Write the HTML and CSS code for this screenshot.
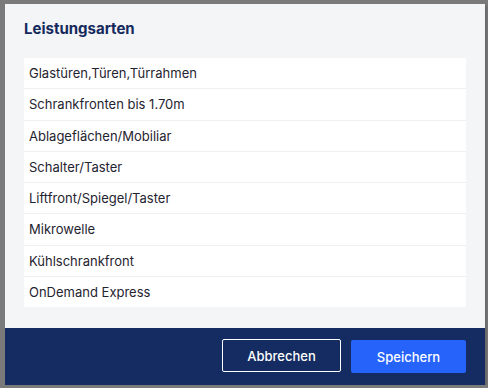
FILE: index.html
```html
<!DOCTYPE html>
<html>
<head>
    <title>Leistungsarten</title>
    <meta name="viewport" content="width=device-width, initial-scale=1"/>
    <link rel="stylesheet" href="styles.css">
</head>
<body>
<div class="modal">
    <div class="modal-body">
        <h2 class="modal-title">Leistungsarten</h2>
        <ul class="service-list">
            <li>Glastüren,Türen,Türrahmen</li>
            <li>Schrankfronten bis 1.70m</li>
            <li>Ablageflächen/Mobiliar</li>
            <li>Schalter/Taster</li>
            <li>Liftfront/Spiegel/Taster</li>
            <li>Mikrowelle</li>
            <li>Kühlschrankfront</li>
            <li>OnDemand Express</li>
        </ul>
    </div>
    <div class="modal-footer">
        <button type="button" class="btn btn-outline">Abbrechen</button>
        <button type="submit" class="btn btn-primary">Speichern</button>
    </div>
</div>
</body>
</html>
```

FILE: styles.css
```css
body {
    margin: 0;
    background: #7a7a7a;
    font-family: Inter, "Noto Sans", Arial, sans-serif;
}

.modal {
    margin: 4px 0 0 5px;
    width: 480px;
    height: 381px;
    background: #f4f5f7;
    display: flex;
    flex-direction: column;
    box-shadow: 2px 2px 2px rgba(0, 0, 0, 0.15);
}

.modal-body {
    flex: 1;
    padding: 16px 19px 0 19px;
}

.modal-title {
    margin: 0 0 20px 0;
    font-size: 15px;
    line-height: 18px;
    font-weight: 700;
    color: #14295c;
}

.service-list {
    list-style: none;
    margin: 0;
    padding: 0;
    background: #ffffff;
}

.service-list li {
    height: 30.25px;
    line-height: 30px;
    padding-left: 5px;
    font-size: 13px;
    color: #1f2430;
    border-bottom: 1px solid #eeeff1;
}

.service-list li:last-child {
    border-bottom: none;
}

.modal-footer {
    height: 57px;
    box-sizing: border-box;
    background: #142c61;
    display: flex;
    justify-content: flex-end;
    align-items: flex-start;
    gap: 10px;
    padding: 11px 19px 0 0;
}

.btn {
    height: 33px;
    font-family: inherit;
    font-size: 13px;
    font-weight: 500;
    color: #ffffff;
    border-radius: 2px;
    cursor: pointer;
}

.btn-outline {
    width: 119px;
    background: transparent;
    border: 1px solid #ffffff;
}

.btn-primary {
    width: 115px;
    margin-top: 1px;
    background: #2563fb;
    border: none;
}
```
